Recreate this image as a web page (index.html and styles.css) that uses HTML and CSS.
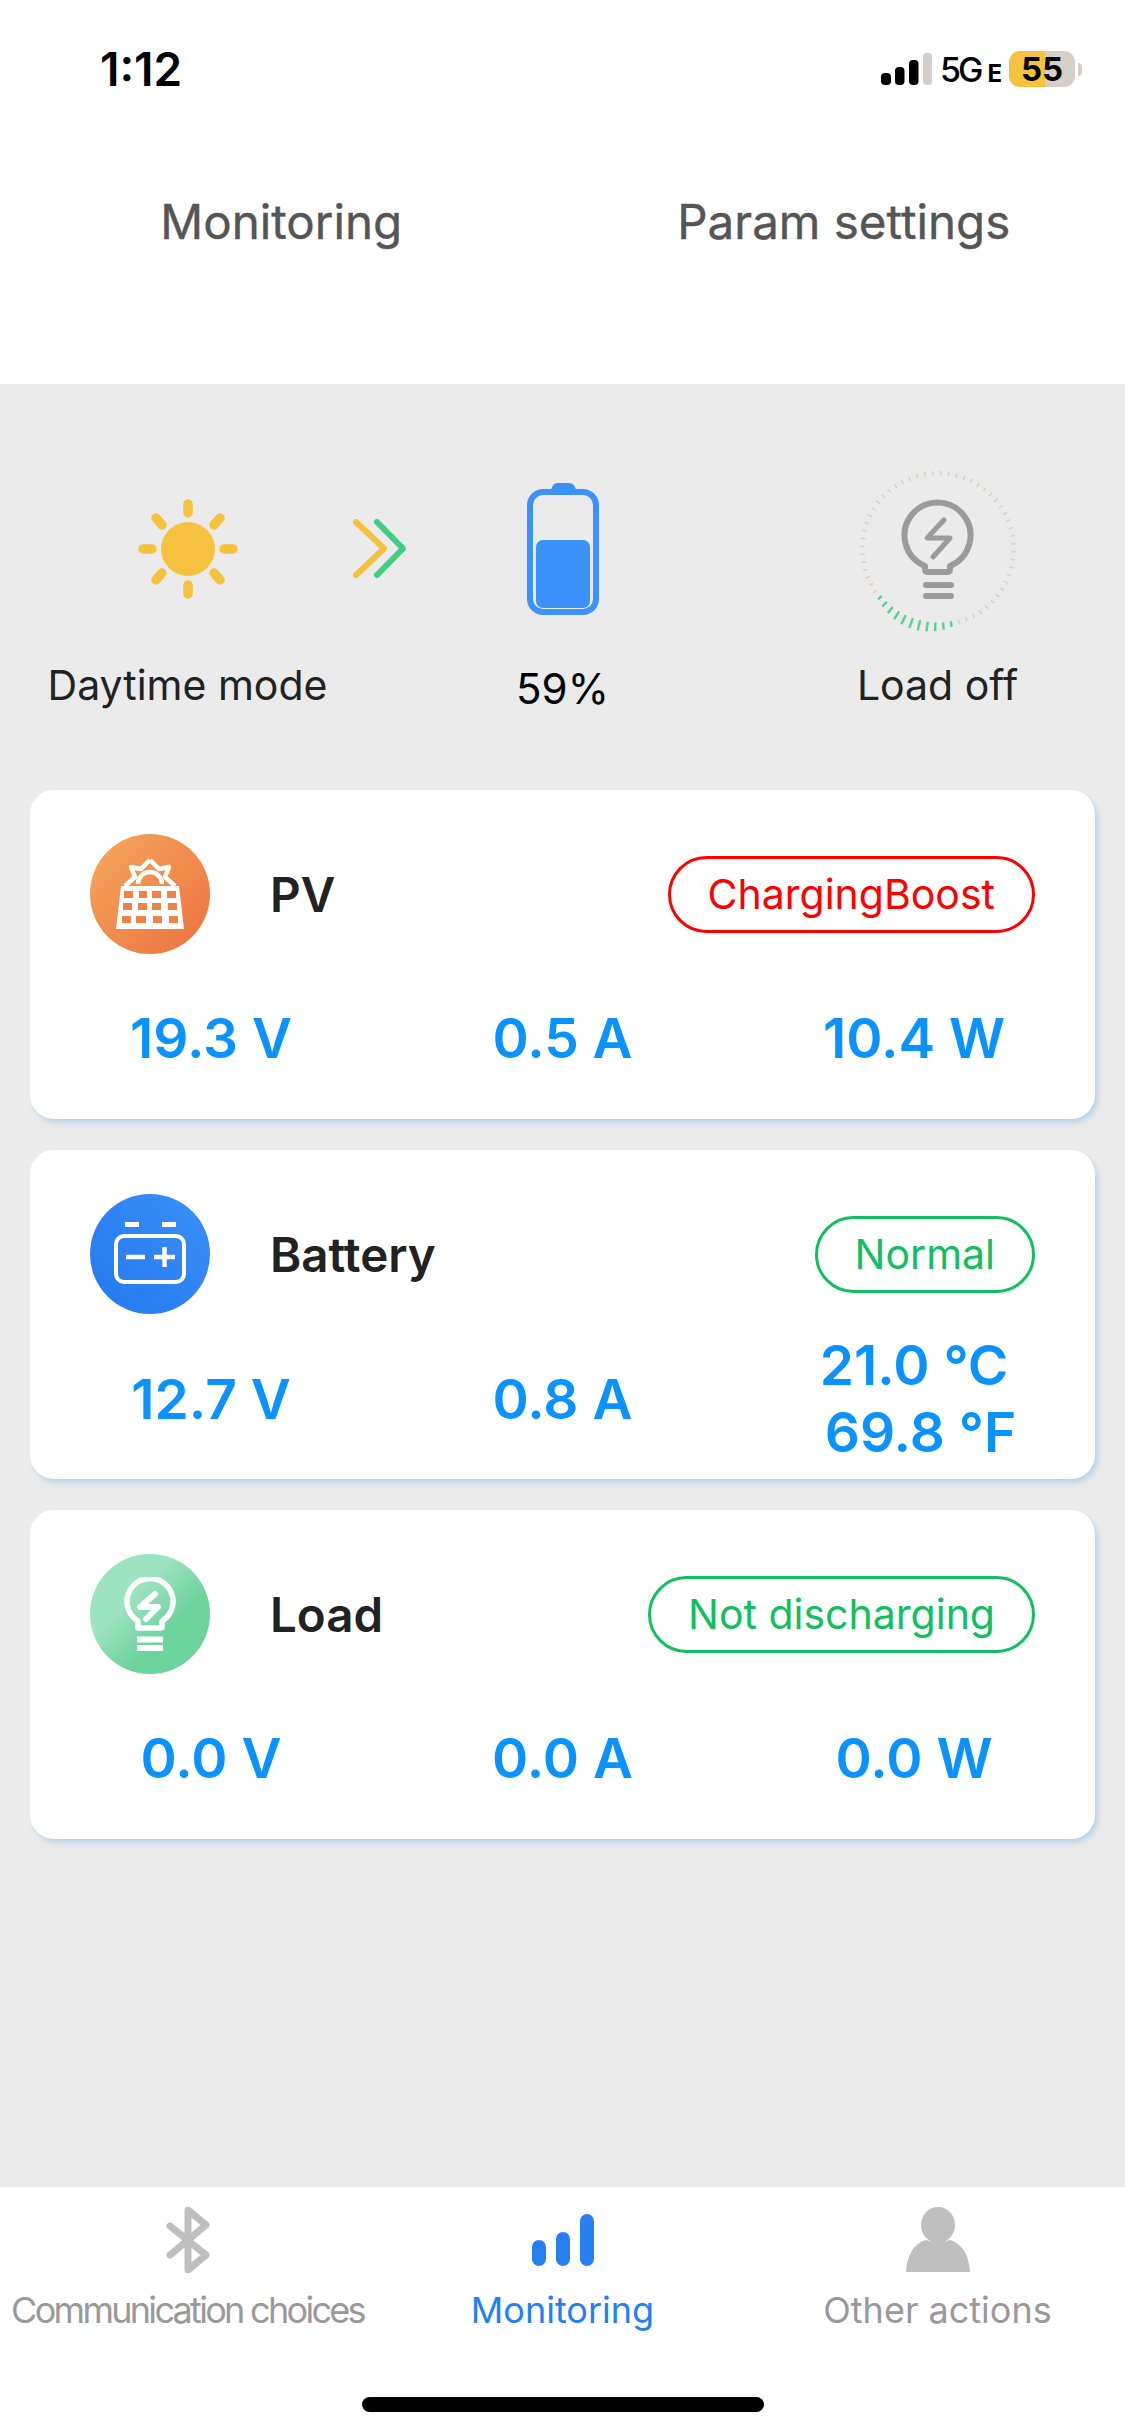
FILE: index.html
```html
<!DOCTYPE html>
<html lang="en">
<head>
<meta charset="utf-8">
<title>Monitoring</title>
<link rel="stylesheet" href="styles.css">
</head>
<body>
<div class="app">
  <header class="top">
    <div class="status">
      <span class="time">1:12</span>
      <div class="status-right">
        <svg class="signal" width="51" height="32" viewBox="0 0 51 32"><rect x="0" y="20" width="10" height="12" rx="4" fill="#000"/><rect x="14" y="14" width="9.500" height="18" rx="4" fill="#000"/><rect x="28" y="7" width="9.500" height="25" rx="4" fill="#000"/><rect x="42" y="0" width="9" height="32" rx="4" fill="#d5cec9"/></svg>
        <span class="net">5G</span><span class="net-e">E</span>
        <div class="batt"><span class="batt-num">55</span></div>
        <span class="batt-tip"></span>
      </div>
    </div>
    <nav class="tabs"><span>Monitoring</span><span>Param settings</span></nav>
  </header>

  <main class="main">
    <section class="summary">
      <div class="sum-col">
        <div class="sum-icon">
          <svg width="110" height="110" viewBox="0 0 110 110"><circle cx="55" cy="55" r="27" fill="#f5c13e"/><g stroke="#f5c13e" stroke-width="9.500" stroke-linecap="round"><path d="M55 10v9M55 91v9M10 55h9M91 55h9M23 24l6 7M87 24l-6 7M23 86l6-7M87 86l-6-7"/></g></svg>
        </div>
        <span class="sum-label">Daytime mode</span>
      </div>
      <div class="arrows">
        <svg width="56" height="60" viewBox="0 0 56 60"><path d="M4 3l28 26.500L4 56" fill="none" stroke="#f5c13e" stroke-width="6" stroke-linecap="round" stroke-linejoin="round"/><path d="M25 3l26 26.500L25 56" fill="none" stroke="#3fd07f" stroke-width="6" stroke-linecap="round" stroke-linejoin="round"/></svg>
      </div>
      <div class="sum-col sum-batt">
        <div class="sum-icon">
          <svg width="72" height="132" viewBox="0 0 72 132"><path d="M24 8q1-8 7-8h11q6 0 7 8z" fill="#3b8ff7"/><rect x="3" y="9" width="66" height="120" rx="13" fill="none" stroke="#3b92fb" stroke-width="6"/><rect x="9" y="57" width="54" height="68" rx="7" fill="#3b92fb"/></svg>
        </div>
        <span class="sum-label pct">59%</span>
      </div>
      <div class="sum-col">
        <div class="sum-icon">
          <svg class="ring" width="156" height="156" viewBox="0 0 156 156">
            <g id="ticks"></g>
            <g fill="none" stroke="#9b9b9b" stroke-width="6" stroke-linecap="round" stroke-linejoin="round">
              <path d="M65 95A33 33 0 1 1 90 95v3q0 3-3 3H68q-3 0-3-3z"/>
              <path d="M84 49L67 67h23L73 86" stroke-width="5"/>
              <path d="M66 114h25M66 125h25" stroke-width="6"/>
            </g>
          </svg>
        </div>
        <span class="sum-label">Load off</span>
      </div>
    </section>

    <section class="cards">
      <article class="card">
        <div class="card-head">
          <div class="dot dot-pv">
            <svg width="72" height="74" viewBox="0 0 72 74">
              <path d="M7 29h58l5 43H2z" fill="#fff"/>
              <g fill="#ef8248">
                <rect x="10" y="34" width="9" height="7"/><rect x="25" y="34" width="8" height="7"/><rect x="38" y="34" width="9" height="7"/><rect x="53" y="34" width="9" height="7"/>
                <rect x="9" y="46" width="9" height="7"/><rect x="24" y="46" width="9" height="7"/><rect x="38" y="46" width="9" height="7"/><rect x="54" y="46" width="9" height="7"/>
                <rect x="8" y="59" width="9" height="7"/><rect x="22" y="59" width="10" height="7"/><rect x="39" y="59" width="9" height="7"/><rect x="55" y="59" width="9" height="7"/>
              </g>
              <g fill="none" stroke="#fff" stroke-width="4.500" stroke-linejoin="round">
                <path d="M36 3l-9 9-10-2 4 10-10 9M36 3l9 9 10-2-4 10 10 9"/>
                <path d="M24 27a12 12 0 0 1 24 0"/>
              </g>
            </svg>
          </div>
          <span class="card-title">PV</span>
          <span class="badge badge-red">ChargingBoost</span>
        </div>
        <div class="vals"><span>19.3 V</span><span>0.5 A</span><span>10.4 W</span></div>
      </article>
      <article class="card">
        <div class="card-head">
          <div class="dot dot-batt">
            <svg width="72" height="64" viewBox="0 0 72 64" fill="none" stroke="#fff"><rect x="2" y="14" width="68" height="46" rx="8" stroke-width="4"/><path d="M11 2.500h14M48 2.500h14" stroke-width="5"/><path d="M12 35h19M40 35h21M50.500 25v20" stroke-width="4.500"/></svg>
          </div>
          <span class="card-title">Battery</span>
          <span class="badge badge-green">Normal</span>
        </div>
        <div class="vals"><span>12.7 V</span><span>0.8 A</span><span class="temp"><span>21.0 °C</span><span class="temp-b">69.8 °F</span></span></div>
      </article>
      <article class="card">
        <div class="card-head">
          <div class="dot dot-load">
            <svg width="56" height="74" viewBox="0 0 56 74" fill="none" stroke="#fff"><path d="M16 51v-7a23 23 0 1 1 24 0v7z" stroke-width="5.500" stroke-linejoin="round"/><path d="M33 17L18 30h18L24 42" stroke-width="6" stroke-linecap="round" stroke-linejoin="round"/><path d="M15 62.500h26M15 71h26" stroke-width="6"/></svg>
          </div>
          <span class="card-title">Load</span>
          <span class="badge badge-green">Not discharging</span>
        </div>
        <div class="vals"><span>0.0 V</span><span>0.0 A</span><span>0.0 W</span></div>
      </article>
    </section>
  </main>

  <footer class="tabbar">
    <div class="tab">
      <svg class="tab-ic" width="44" height="66" viewBox="0 0 44 66" fill="none" stroke="#bfbfbf" stroke-width="7" stroke-linejoin="round" stroke-linecap="round"><path d="M4 19l36 29-18 15V3l18 15L4 48"/></svg>
      <span class="tab-label tight">Communication choices</span>
    </div>
    <div class="tab tab-on">
      <svg class="tab-ic" width="64" height="66" viewBox="0 0 64 66"><rect x="1" y="33" width="14" height="26" rx="7" fill="#2680f0"/><rect x="25" y="25" width="14" height="34" rx="7" fill="#2680f0"/><rect x="49" y="7" width="14" height="52" rx="7" fill="#2680f0"/></svg>
      <span class="tab-label">Monitoring</span>
    </div>
    <div class="tab">
      <svg class="tab-ic" width="64" height="66" viewBox="0 0 64 66"><ellipse cx="32" cy="18" rx="17" ry="18" fill="#bfbfbf"/><path d="M0 65C1 48 8 36 20 33q12 5 24 0C56 36 63 48 64 65z" fill="#bfbfbf"/></svg>
      <span class="tab-label">Other actions</span>
    </div>
    <span class="home"></span>
  </footer>
</div>
<script src="ticks.js"></script>
</body>
</html>
```

FILE: ticks.js
```js
var g = document.getElementById('ticks');
var n = 60, out = '';
for (var i = 0; i < n; i++) {
  var deg = i * 360 / n + 2;
  var a = deg * Math.PI / 180;
  /* clockwise from top; the green arc runs from about 168deg to 230deg */
  var on = deg >= 166 && deg <= 231;
  var r1 = 73.5;
  var r2 = on ? 78 + 6 * Math.sin(Math.PI * (deg - 166) / 65) : 78;
  var x1 = 78 + r1 * Math.sin(a), y1 = 78 - r1 * Math.cos(a);
  var x2 = 78 + r2 * Math.sin(a), y2 = 78 - r2 * Math.cos(a);
  out += '<line x1="' + x1.toFixed(1) + '" y1="' + y1.toFixed(1) + '" x2="' + x2.toFixed(1) + '" y2="' + y2.toFixed(1) +
    '" stroke="' + (on ? '#55d192' : '#d8d0ca') + '" stroke-width="' + (on ? 2.4 : 1.7) + '"/>';
}
g.innerHTML = out;
```

FILE: styles.css
```css
* { box-sizing: border-box; }
html, body { margin: 0; padding: 0; }
body { width: 1125px; height: 2436px; font-family: Inter, "Liberation Sans", sans-serif; background: #fff; overflow: hidden; }
.app { display: flex; flex-direction: column; height: 2436px; }

.top { height: 384px; background: #fff; flex: none; }
.status { height: 96px; padding: 51px 43px 0 100px; display: flex; justify-content: space-between; align-items: flex-start; }
.time { font-size: 46px; line-height: 36px; font-weight: 600; color: #000; }
.status-right { display: flex; align-items: flex-start; }
.signal { margin: 2px 8px 0 0; }
.net { font-size: 34px; line-height: 34px; font-weight: 500; color: #000; margin-top: 2px; letter-spacing: -3px; }
.net-e { font-size: 24px; line-height: 24px; font-weight: 700; color: #000; margin: 11px 7px 0 7px; }
.batt { width: 66px; height: 36px; border-radius: 11px; background: linear-gradient(90deg, #f5c13e 36px, #d5cec9 36px); display: flex; align-items: center; justify-content: center; }
.batt-num { font-size: 33px; line-height: 36px; font-weight: 700; color: #000; }
.batt-tip { width: 4px; height: 13px; background: #d5cec9; border-radius: 0 7px 7px 0; margin: 12px 0 0 3px; }

.tabs { display: grid; grid-template-columns: 1fr 1fr; justify-items: center; margin-top: 96px; }
.tabs span { font-size: 47.500px; line-height: 60px; font-weight: 400; color: #555; -webkit-text-stroke: .4px #555; }

.main { flex: 1; background: #ebebeb; padding-top: 99px; }
.summary { display: grid; grid-template-columns: 375px 375px 375px; height: 307px; position: relative; }
.sum-col { display: flex; flex-direction: column; align-items: center; }
.sum-icon { height: 132px; display: flex; align-items: center; justify-content: center; }
.ring { overflow: visible; }
.sum-label { margin-top: 45px; font-size: 41px; line-height: 50px; color: #222; }
.pct { margin-top: 49px; font-size: 42px; color: #000; }
.sum-batt { grid-column: 2; }
.arrows { position: absolute; left: 352px; top: 36px; }

.cards { display: flex; flex-direction: column; gap: 31px; padding: 0 30px; }
.card { height: 329px; background: #fff; border-radius: 24px; padding: 44px 60px 0; box-shadow: 3px 4px 5px rgba(120, 180, 225, .4); }
.card-head { display: flex; align-items: center; height: 120px; }
.dot { width: 120px; height: 120px; border-radius: 50%; flex: none; display: flex; align-items: center; justify-content: center; }
.dot-pv { background: linear-gradient(135deg, #f4a95c, #ee7040); }
.dot-batt { background: linear-gradient(45deg, #2478f0, #3a90f6); }
.dot-load { background: linear-gradient(135deg, #9ce3c0 35%, #6cd39b 65%); }
.card-title { margin-left: 60px; font-size: 47.500px; font-weight: 600; color: #222; }
.badge { margin-left: auto; height: 77px; border-radius: 39px; border: 3px solid; padding: 0 37px; display: flex; align-items: center; font-size: 41px; }
.badge-red { color: #ff0000; border-color: #ff0000; }
.badge-green { color: #10c060; border-color: #10c060; }
.vals { display: grid; grid-template-columns: 362px 341px 1fr; margin: 18px -60px 0; height: 132px; align-items: center; }
.vals > span { font-size: 55px; line-height: 67px; font-weight: 600; color: #0a93ff; text-align: center; }
.temp { display: flex; flex-direction: column; }
.temp-b { padding-left: 13px; }

.tabbar { flex: none; height: 249px; background: #fff; display: grid; grid-template-columns: repeat(3, 1fr); position: relative; }
.tab { display: flex; flex-direction: column; align-items: center; height: 150px; }
.tab-ic { margin-top: 20px; flex: none; }
.tab-label { margin-top: 15px; font-size: 36px; line-height: 44px; color: #999; white-space: nowrap; }
.tab-label.tight { letter-spacing: -2.700px; }
.tab-on .tab-label { color: #1f80f8; }
.home { position: absolute; left: 362px; top: 210px; width: 402px; height: 15px; border-radius: 8px; background: #000; }
```
